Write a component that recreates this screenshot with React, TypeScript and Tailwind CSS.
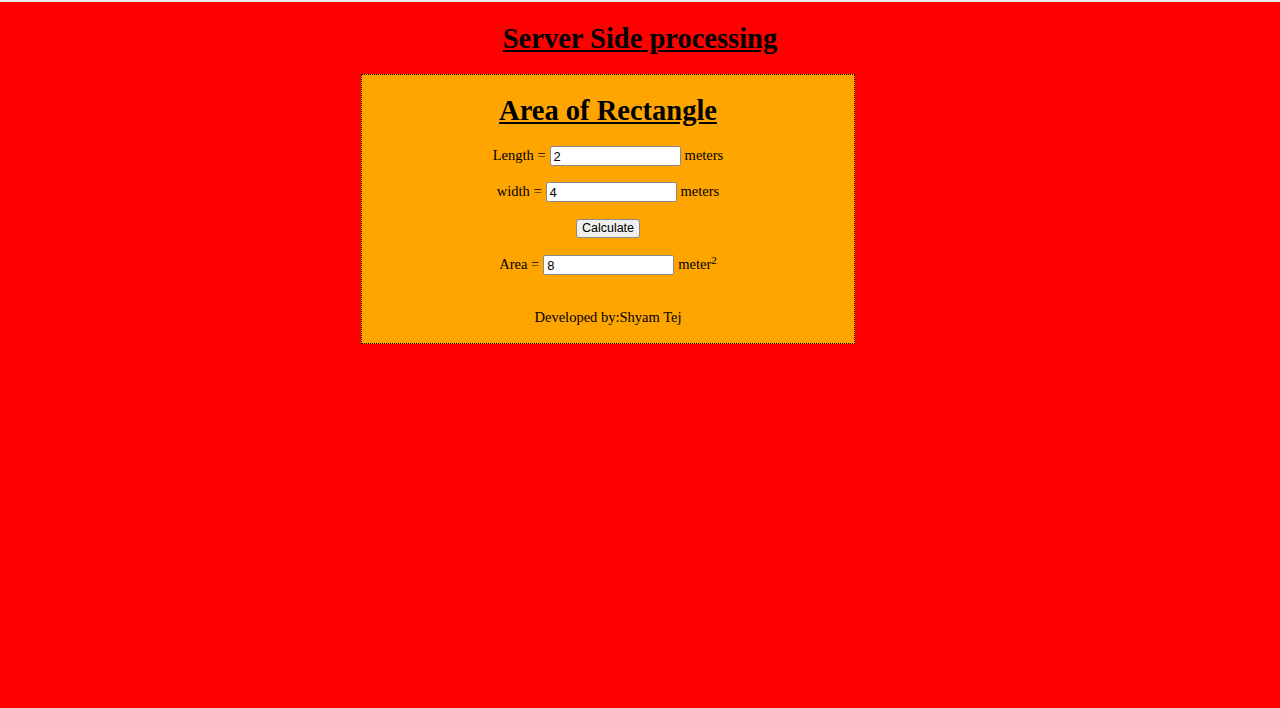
import React from 'react';

const Field = ({ label, value, unit }: { label: string; value: string; unit: React.ReactNode }) => (
  <div className="h-[24px] flex items-center justify-center text-[14.5px] text-black">
    <span>{label} =</span>
    <input
      readOnly
      value={value}
      className="ml-[4px] w-[131px] h-[20px] bg-white border border-[#8a8a8a] rounded-[2px] px-[3px] text-[13px] text-black outline-none font-['Liberation_Sans',Arial,sans-serif]"
    />
    <span className="ml-[4px]">{unit}</span>
  </div>
);

export default function App() {
  return (
    <div className="min-h-[708px] bg-[#ff0000] font-['Liberation_Serif','Times_New_Roman',serif]">
      <div className="h-[2px] bg-[#ececec]" />

      <h1 className="mt-[18px] h-[37px] leading-[37px] text-center text-[28.5px] font-bold underline text-black">
        Server Side processing
      </h1>

      {/* card */}
      <div className="mt-[17px] ml-[361px] w-[494px] bg-[#ffa500] border border-dotted border-black pt-[18px] pb-[16px]">
        <h1 className="h-[36px] leading-[36px] text-center text-[28.5px] font-bold underline text-black">
          Area of Rectangle
        </h1>

        <div className="mt-[15px] flex flex-col gap-[12px]">
          <Field label="Length" value="2" unit="meters" />
          <Field label="width" value="4" unit="meters" />
          <div className="h-[24px] flex items-center justify-center">
            <button className="h-[19px] px-[5px] bg-[#efefef] border border-[#8a8a8a] rounded-[3px] text-[12.5px] leading-none text-black font-['Liberation_Sans',Arial,sans-serif]">
              Calculate
            </button>
          </div>
        </div>

        <div className="mt-[13px]">
          <Field
            label="Area"
            value="8"
            unit={
              <>
                meter<sup className="text-[11px]">2</sup>
              </>
            }
          />
        </div>

        <p className="mt-[30px] h-[20px] leading-[20px] text-center text-[14.5px] text-black">Developed by:Shyam Tej</p>
      </div>
    </div>
  );
}
